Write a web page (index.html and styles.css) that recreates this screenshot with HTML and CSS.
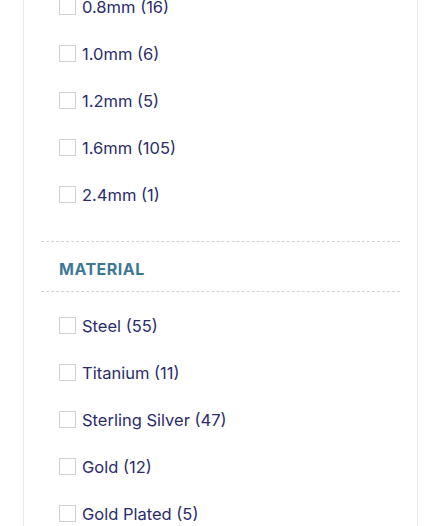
FILE: index.html
```html
<!DOCTYPE html>
<html>
<head>
<meta charset="utf-8">
<link rel="stylesheet" href="styles.css">
</head>
<body>
<div class="card">
  <ul class="options first">
    <li class="option"><span class="box"></span><span class="label">0.8mm (16)</span></li>
    <li class="option"><span class="box"></span><span class="label">1.0mm (6)</span></li>
    <li class="option"><span class="box"></span><span class="label">1.2mm (5)</span></li>
    <li class="option"><span class="box"></span><span class="label">1.6mm (105)</span></li>
    <li class="option"><span class="box"></span><span class="label">2.4mm (1)</span></li>
  </ul>
  <div class="section">
    <h3 class="section-title">MATERIAL</h3>
  </div>
  <ul class="options">
    <li class="option"><span class="box"></span><span class="label">Steel (55)</span></li>
    <li class="option"><span class="box"></span><span class="label">Titanium (11)</span></li>
    <li class="option"><span class="box"></span><span class="label">Sterling Silver (47)</span></li>
    <li class="option"><span class="box"></span><span class="label">Gold (12)</span></li>
    <li class="option"><span class="box"></span><span class="label">Gold Plated (5)</span></li>
  </ul>
</div>
</body>
</html>
```
FILE: styles.css
```css
html, body {
  margin: 0;
  padding: 0;
  background: #ffffff;
  overflow: hidden;
}
body {
  font-family: "Inter", "DejaVu Sans", sans-serif;
}
.card {
  box-sizing: border-box;
  margin: -17px 0 0 23px;
  width: 395px;
  border-left: 1px solid #ebebeb;
  border-right: 1px solid #ebebeb;
  padding: 0 17px;
  min-height: 600px;
}
.options {
  list-style: none;
  margin: 0;
  padding: 0 0 0 18px;
}
.options.first {
  padding-bottom: 23px;
}
.section + .options {
  padding-top: 10px;
}
.option {
  display: flex;
  align-items: center;
  height: 47px;
}
.box {
  width: 15px;
  height: 15px;
  border: 1px solid #d2d2d2;
  box-sizing: content-box;
  margin-right: 6px;
  flex: none;
}
.label {
  font-size: 16.5px;
  color: #2a2c6c;
}
.section {
  border-top: 1px dashed #d4d4d4;
  border-bottom: 1px dashed #d4d4d4;
  height: 49px;
  display: flex;
  align-items: center;
  padding-left: 18px;
}
.section-title {
  margin: 4px 0 0;
  font-size: 16px;
  font-weight: 700;
  letter-spacing: 0.5px;
  color: #3f7895;
}
```
